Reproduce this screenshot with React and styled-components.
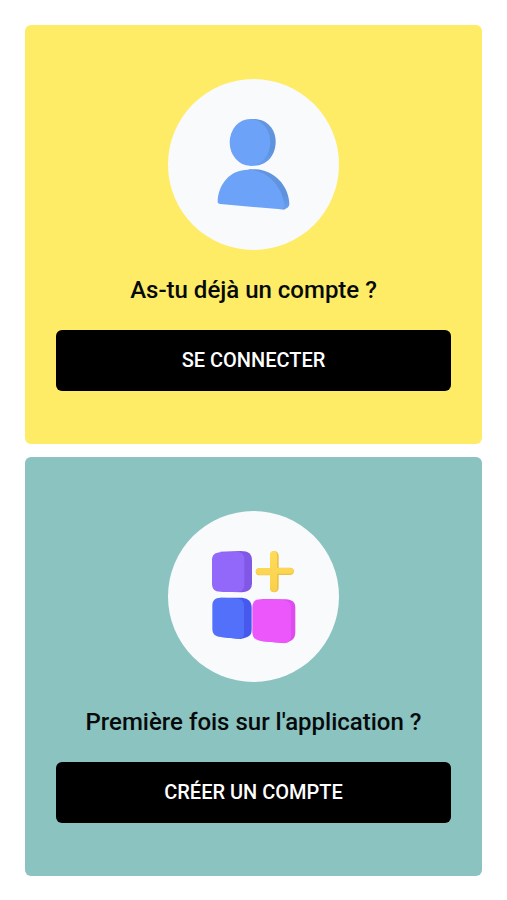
import React from "react";
import styled, { createGlobalStyle } from "styled-components";

const GlobalStyle = createGlobalStyle`
  *, *::before, *::after { box-sizing: border-box; }
  body {
    margin: 0;
    background: #ffffff;
    color: #060a0a;
    font-family: Roboto, "Liberation Sans", sans-serif;
  }
`;

const Page = styled.main`
  display: flex;
  flex-direction: column;
  gap: 13px;
  padding: 25px;
`;

const Card = styled.section`
  display: flex;
  flex-direction: column;
  align-items: center;
  padding: 54px 31px 53px;
  border-radius: 6px;
  background: ${({ $tone }) => $tone};
`;

const Medallion = styled.div`
  width: 171px;
  height: 171px;
  border-radius: 50%;
  background: #f9fafc;
`;

const Drawing = styled.svg`
  display: block;
  width: 100%;
  height: 100%;
`;

const Title = styled.h2`
  margin: 24px 0;
  font-size: 24px;
  line-height: 32px;
  font-weight: 500;
  text-align: center;
`;

const Action = styled.button`
  width: 100%;
  padding: 18px 16px 19px;
  border: 0;
  border-radius: 6px;
  background: #000000;
  color: #ffffff;
  font-family: inherit;
  font-size: 20px;
  line-height: 24px;
  font-weight: 500;
  text-transform: uppercase;
  cursor: pointer;
`;

function UserDrawing() {
  return (
    <Drawing viewBox="25 27 513 513" aria-hidden="true">
      <defs>
        <linearGradient id="user-edge" x1="0" y1="0" x2="0" y2="1">
          <stop offset="0" stopColor="#6595df" />
          <stop offset="0.65" stopColor="#5e92dc" />
          <stop offset="1" stopColor="#679ff2" />
        </linearGradient>
      </defs>
      <path fill="url(#user-edge)" d="M272 147h14c37 2 62 31 62 68 0 40-26 71-64 72h-14z" />
      <ellipse cx="271" cy="217" rx="61" ry="70" fill="#6ca3f8" />
      <path fill="url(#user-edge)" d="M266 298h22c56 3 98 48 101 103 0 8-4 12-16 18l-12-2z" />
      <path fill="#6ca3f8" d="M174 396c1-54 38-97 91-97 56 0 103 49 109 106 1 8-3 14-10 13l-182-16c-5-1-8-3-8-6z" />
    </Drawing>
  );
}

function AppsDrawing() {
  return (
    <Drawing viewBox="25 29 513 513" aria-hidden="true">
      <defs>
        <linearGradient id="plus-gold" x1="0" y1="0" x2="0" y2="1">
          <stop offset="0" stopColor="#ffdc59" />
          <stop offset="1" stopColor="#f9d04c" />
        </linearGradient>
      </defs>
      <path fill="#8158e6" d="M182 151l61-2c24 0 34 9 34 29v67c0 18-10 27-31 28l-60-2z" />
      <path fill="#9268fa" d="M182 153l50-1c14 0 22 8 22 22v75c0 16-8 23-23 23l-49-1c-17 0-25-9-25-24v-70c0-15 8-23 25-24z" />
      <path fill="#4658ee" d="M182 289l65 0c20 2 29 12 29 30v67c0 16-8 21-33 27l-60-6z" />
      <path fill="#5270fa" d="M182 289l48 2c15 1 23 9 23 23v82c0 12-7 17-19 16l-50-5c-18-1-26-10-26-25v-69c0-16 8-24 24-24z" />
      <path fill="#dc4cef" d="M306 293l73 1c19 1 28 9 28 25v73c0 18-7 26-32 34l-68-6z" />
      <path fill="#eb57fb" d="M302 294l66 2c17 1 26 9 26 24v84c0 15-8 22-22 21l-68-6c-17-2-26-11-26-28v-73c0-16 8-24 24-24z" />
      <path fill="#edc148" d="M331 162c0-8 5-13 12-13 8 0 13 5 14 13v37h34c7 0 12 4 12 11s-5 11-12 11h-34v40c-1 8-6 12-14 12-7 0-12-4-12-12v-39h-31c-7 0-12-4-12-11s5-11 12-11h31z" />
      <path fill="url(#plus-gold)" d="M331 162c0-8 4-13 11-13 6 0 10 5 10 13v38h39c7 0 11 3 11 8s-4 9-11 9h-39v44c0 7-4 10-10 10-7 0-11-4-11-11v-40h-31c-7 0-11-4-11-10s4-10 11-10h31z" />
    </Drawing>
  );
}

const choices = [
  { id: "login", tone: "#feec66", Art: UserDrawing, title: "As-tu déjà un compte ?", action: "Se connecter" },
  { id: "signup", tone: "#8bc3c1", Art: AppsDrawing, title: "Première fois sur l'application ?", action: "Créer un compte" },
];

export default function App() {
  return (
    <>
      <GlobalStyle />
      <Page>
        {choices.map(({ id, tone, Art, title, action }) => (
          <Card key={id} $tone={tone} aria-labelledby={id}>
            <Medallion>
              <Art />
            </Medallion>
            <Title id={id}>{title}</Title>
            <Action type="button">{action}</Action>
          </Card>
        ))}
      </Page>
    </>
  );
}
